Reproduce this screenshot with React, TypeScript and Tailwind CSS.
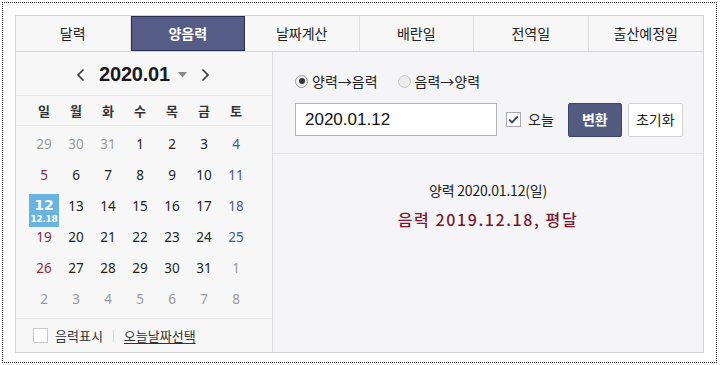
import React from 'react';

const tabs = ['달력', '양음력', '날짜계산', '배란일', '전역일', '출산예정일'];
const weekdays = ['일', '월', '화', '수', '목', '금', '토'];

type Day = { d: number; kind: 'prev' | 'cur' | 'next' };

const buildDays = (): Day[] => {
  const days: Day[] = [];
  [29, 30, 31].forEach(d => days.push({ d, kind: 'prev' }));
  for (let d = 1; d <= 31; d++) days.push({ d, kind: 'cur' });
  for (let d = 1; d <= 8; d++) days.push({ d, kind: 'next' });
  return days;
};

const dayColor = (day: Day, col: number) => {
  if (day.kind !== 'cur') return 'text-[#9a9a9a]';
  if (col === 0) return 'text-[#8a2a3c]';
  if (col === 6) return 'text-[#4b5a86]';
  return 'text-[#1e1e1e]';
};

const Calendar: React.FC = () => {
  const days = buildDays();
  return (
    <div className="w-[257px] shrink-0 bg-[#f7f7f8] border-r border-[#dcdcdc] flex flex-col">
      {/* month header */}
      <div className="h-[44px] border-b border-[#e6e6e6] flex items-center justify-center gap-[14px] pl-[2px] pr-[4px]">
        <svg width="9" height="14" viewBox="0 0 9 14" className="mt-[2px]">
          <path d="M7.5 1.5 L2 7 L7.5 12.5" stroke="#333" strokeWidth="1.6" fill="none" />
        </svg>
        <div className="flex items-center gap-[8px]">
          <span className="text-[20px] font-bold text-[#1a1a1a] tracking-[-0.2px] font-['Liberation_Sans',sans-serif]">2020.01</span>
          <svg width="9" height="6" viewBox="0 0 9 6" className="mt-[2px]">
            <path d="M0 0 H9 L4.5 5.5 Z" fill="#8a8a8a" />
          </svg>
        </div>
        <svg width="9" height="14" viewBox="0 0 9 14" className="mt-[2px]">
          <path d="M1.5 1.5 L7 7 L1.5 12.5" stroke="#333" strokeWidth="1.6" fill="none" />
        </svg>
      </div>

      {/* weekdays */}
      <div className="h-[30px] border-b border-[#e6e6e6] pl-[12px]">
        <div className="grid grid-cols-7 w-[224px] h-full items-center">
          {weekdays.map(w => (
            <div key={w} className="text-center text-[13px] font-semibold text-[#333]">{w}</div>
          ))}
        </div>
      </div>

      {/* dates */}
      <div className="pt-[3px] pl-[12px] h-[193px] border-b border-[#e6e6e6]">
        <div className="grid grid-cols-7 auto-rows-[31px] w-[224px] items-center">
          {days.map((day, i) => {
            const col = i % 7;
            if (day.kind === 'cur' && day.d === 12) {
              return (
                <div key={i} className="flex justify-center self-start">
                  <div className="mt-[3px] w-[30px] h-[33px] bg-[#6ab4e2] flex flex-col items-center text-white font-bold leading-none font-['DejaVu_Sans',sans-serif]">
                    <span className="text-[14px] mt-[4px]">12</span>
                    <span className="text-[9px] mt-[3px] tracking-[-0.3px]">12.18</span>
                  </div>
                </div>
              );
            }
            return (
              <div
                key={i}
                className={`text-center text-[13.5px] font-['Noto_Sans',sans-serif] ${dayColor(day, col)}`}
              >
                {day.d}
              </div>
            );
          })}
        </div>
      </div>

      {/* footer */}
      <div className="flex-1 flex items-center pl-[17px] text-[13px] text-[#333]">
        <span className="w-[15px] h-[15px] border border-[#c8c8c8] bg-white mr-[7px]" />
        <span>음력표시</span>
        <span className="w-px h-[12px] bg-[#dddddd] mx-[10px]" />
        <span className="underline underline-offset-2">오늘날짜선택</span>
      </div>
    </div>
  );
};

const Converter: React.FC = () => (
  <div className="flex-1 flex flex-col bg-[#f5f5f7]">
    <div className="h-[102px] border-b border-[#e3e3e6] pl-[22px] pt-[20px]">
      <div className="flex items-center text-[14px] text-[#222] h-[18px]">
        <span className="w-[13px] h-[13px] rounded-full border border-[#9a9a9a] bg-[#f0f0f0] flex items-center justify-center mr-[4px]">
          <span className="w-[6px] h-[6px] rounded-full bg-[#333]" />
        </span>
        <span>양력→음력</span>
        <span className="w-[13px] h-[13px] rounded-full border border-[#c4c4c4] bg-[#ececec] ml-[20px] mr-[4px]" />
        <span>음력→양력</span>
      </div>
      <div className="flex items-center mt-[13px] h-[33px]">
        <div className="w-[202px] h-[33px] border border-[#b5b5b5] bg-white flex items-center pl-[9px] text-[17px] text-[#111] font-['Liberation_Sans',sans-serif]">
          2020.01.12
        </div>
        <span className="ml-[9px] w-[15px] h-[15px] border border-[#a8a8b8] bg-white flex items-center justify-center">
          <svg width="11" height="9" viewBox="0 0 11 9">
            <path d="M1.2 4.6 L4 7.4 L9.8 1.3" stroke="#2f3f7a" strokeWidth="1.8" fill="none" />
          </svg>
        </span>
        <span className="ml-[7px] text-[14px] text-[#222]">오늘</span>
        <button className="ml-[14px] w-[54px] h-[34px] rounded-[2px] bg-[#545b81] border border-[#3e4468] text-white text-[14px] font-bold">
          변환
        </button>
        <button className="ml-[6px] w-[55px] h-[34px] rounded-[2px] bg-white border border-[#cfcfcf] text-[#222] text-[14px]">
          초기화
        </button>
      </div>
    </div>
    <div className="flex-1 flex flex-col items-center pt-[26px]">
      <div className="text-[14px] text-[#222] tracking-[-0.2px]">양력 2020.01.12(일)</div>
      <div className="mt-[6px] text-[16px] text-[#7c1530] font-medium tracking-[1.6px]">음력 2019.12.18, 평달</div>
    </div>
  </div>
);

export default function App() {
  return (
    <div className="w-[720px] h-[365px] bg-white pt-[2px] pl-[2px] pr-[3px] pb-[2px] font-['Noto_Sans_CJK_KR',sans-serif]">
      <div className="w-full h-full border border-dotted border-[#222] pt-[12px] pl-[12px] pr-[12px] pb-[9px]">
        <div className="w-[689px] h-[338px] border border-[#d4d4d4] flex flex-col">
          <div className="grid grid-cols-6 h-[36px] border-b border-[#d4d4d4] bg-[#f7f7f7]">
            {tabs.map((t, i) => (
              <div
                key={t}
                className={
                  i === 1
                    ? 'flex items-center justify-center bg-[#555d86] border border-[#2c3050] text-white font-bold text-[14px]'
                    : 'flex items-center justify-center text-[14px] text-[#222] border-r border-[#dedede] last:border-r-0'
                }
              >
                {t}
              </div>
            ))}
          </div>
          <div className="flex-1 flex">
            <Calendar />
            <Converter />
          </div>
        </div>
      </div>
    </div>
  );
}
